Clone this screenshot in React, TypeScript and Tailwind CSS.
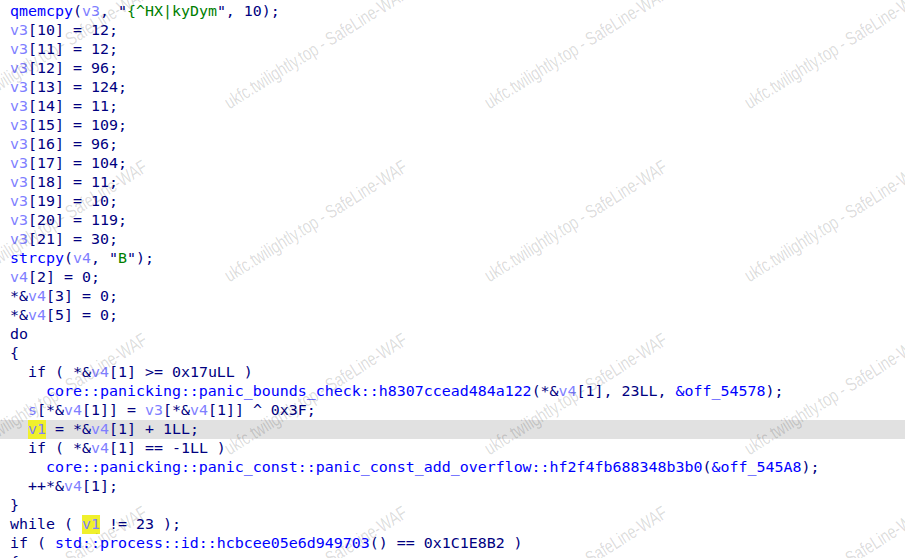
import React from "react";

const C = {
  n: "text-[#000080]",
  f: "text-[#0000ff]",
  v: "text-[#7f7fff]",
  s: "text-[#008000]",
  h: "text-[#7f7fff] bg-[#f0f02c] inline-block h-[19px] align-top",
};

type K = keyof typeof C;
type Tok = [string, K];

const arr: [number, number][] = [
  [10, 12],
  [11, 12],
  [12, 96],
  [13, 124],
  [14, 11],
  [15, 109],
  [16, 96],
  [17, 104],
  [18, 11],
  [19, 10],
  [20, 119],
  [21, 30],
];

const lines: Tok[][] = [
  [["qmemcpy", "f"], ["(", "n"], ["v3", "v"], [', "', "n"], ["{^HX|kyDym", "s"], ['", 10);', "n"]],
  ...arr.map(([i, v]) => [["v3", "v"], [`[${i}] = ${v};`, "n"]] as Tok[]),
  [["strcpy", "f"], ["(", "n"], ["v4", "v"], [', "', "n"], ["B", "s"], ['");', "n"]],
  [["v4", "v"], ["[2] = 0;", "n"]],
  [["*&", "n"], ["v4", "v"], ["[3] = 0;", "n"]],
  [["*&", "n"], ["v4", "v"], ["[5] = 0;", "n"]],
  [["do", "n"]],
  [["{", "n"]],
  [["  if ( *&", "n"], ["v4", "v"], ["[1] >= 0x17uLL )", "n"]],
  [
    ["    ", "n"],
    ["core::panicking::panic_bounds_check::h8307ccead484a122", "f"],
    ["(*&", "n"],
    ["v4", "v"],
    ["[1], 23LL, ", "n"],
    ["&off_54578", "f"],
    [");", "n"],
  ],
  [["  ", "n"], ["s", "v"], ["[*&", "n"], ["v4", "v"], ["[1]] = ", "n"], ["v3", "v"], ["[*&", "n"], ["v4", "v"], ["[1]] ^ 0x3F;", "n"]],
  [["  ", "n"], ["v1", "h"], [" = *&", "n"], ["v4", "v"], ["[1] + 1LL;", "n"]],
  [["  if ( *&", "n"], ["v4", "v"], ["[1] == -1LL )", "n"]],
  [
    ["    ", "n"],
    ["core::panicking::panic_const::panic_const_add_overflow::hf2f4fb688348b3b0", "f"],
    ["(", "n"],
    ["&off_545A8", "f"],
    [");", "n"],
  ],
  [["  ++*&", "n"], ["v4", "v"], ["[1];", "n"]],
  [["}", "n"]],
  [["while ( ", "n"], ["v1", "h"], [" != 23 );", "n"]],
  [["if ( ", "n"], ["std::process::id::hcbcee05e6d949703", "f"], ["() == 0x1C1E8B2 )", "n"]],
  [["{", "n"]],
  [["  return 0;", "n"]],
];

const cols = [-29, 231, 491, 751];
const rows = [112, 285, 458, 631];

export default function App() {
  return (
    <div className="relative w-[905px] h-[558px] overflow-hidden bg-white">
      <div className="pt-[2px] font-['DejaVu_Sans_Mono',monospace] text-[14.95px] leading-[19px] whitespace-pre">
        {lines.map((l, i) => (
          <div key={i} className={i === 22 ? "h-[19px] pl-[10px] bg-[#e1e1e1]" : "h-[19px] pl-[10px]"}>
            {l.map(([t, k], j) => (
              <span key={j} className={C[k]}>
                {t}
              </span>
            ))}
          </div>
        ))}
      </div>
      <div className="pointer-events-none absolute inset-0">
        {rows.map((y) =>
          cols.map((x) => (
            <div key={`${x}-${y}`} className="absolute w-0 h-0" style={{ left: x, top: y }}>
              <div className="absolute left-0 bottom-0 origin-bottom-left -rotate-[32deg] scale-x-[0.75] whitespace-nowrap text-[19px] leading-none font-['Liberation_Sans',sans-serif] text-black/15">
                ukfc.twilightly.top - SafeLine-WAF
              </div>
            </div>
          ))
        )}
      </div>
    </div>
  );
}
